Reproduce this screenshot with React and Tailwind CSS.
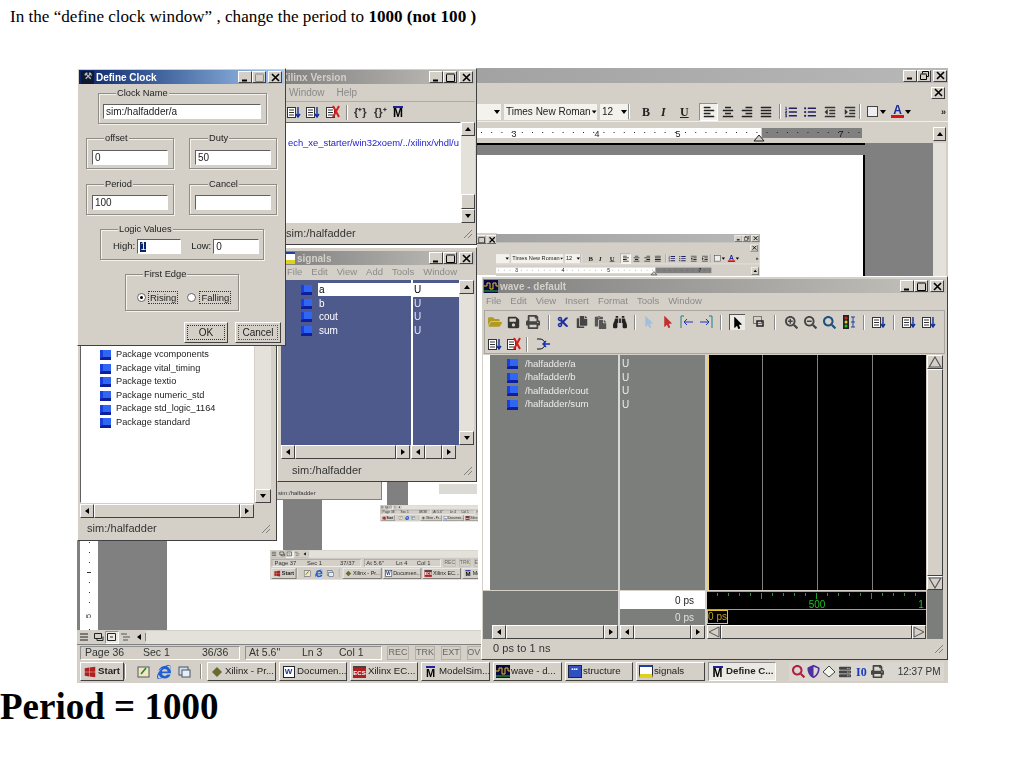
import {
  FaAlignCenter,
  FaAlignJustify,
  FaAlignLeft,
  FaAlignRight,
  FaBinoculars,
  FaCopy,
  FaCut,
  FaFolderOpen,
  FaIndent,
  FaInternetExplorer,
  FaListOl,
  FaListUl,
  FaMousePointer,
  FaOutdent,
  FaPaste,
  FaPrint,
  FaSave,
  FaSearch,
  FaSearchMinus,
  FaSearchPlus,
  FaServer,
  FaShieldAlt,
  FaWindows,
} from "react-icons/fa";

const raised = "border border-t-white border-l-white border-r-[#404040] border-b-[#404040]";
const sunken = "border border-t-[#606060] border-l-[#606060] border-r-white border-b-white";
const thin = "border border-t-[#909090] border-l-[#909090] border-r-white border-b-white";
const track = "bg-[#e4e1da]";

const Glyph = ({ kind, muted }) => {
  const c = muted ? "#8a8a8a" : "#000";
  return (
    <svg width="9" height="9" viewBox="0 0 9 9" fill="none" stroke={c}>
      {kind === "min" && <path d="M1 7.5h5" strokeWidth="2" />}
      {kind === "max" && <path d="M.5 1h8M.5 1.5v7h8v-7" />}
      {kind === "restore" && <path d="M2.5 2.5V.5h6v5h-2M.5 3h6M.5 3.5v5h6v-5" />}
      {kind === "close" && <path d="M1 1l7 7M8 1L1 8" strokeWidth="1.6" />}
    </svg>
  );
};

const CapBtn = ({ kind, muted }) => (
  <div className={`w-[14px] h-[12px] flex items-center justify-center bg-[#d4d0c8] ${raised}`}>
    <Glyph kind={kind} muted={muted} />
  </div>
);

const Caption = ({ icon, text, active, restore, muted }) => (
  <div
    className={`h-[14px] flex items-center justify-between px-[2px] ${
      active
        ? "bg-gradient-to-r from-[#0a246a] to-[#a6caf0] text-white"
        : "bg-gradient-to-r from-[#808080] to-[#c4c2bc] text-[#d4d0c8]"
    }`}
  >
    <div className="flex items-center gap-[2px] text-[10px] font-bold whitespace-nowrap">
      {icon}
      {text}
    </div>
    <div className="flex items-center">
      <CapBtn kind="min" />
      <CapBtn kind={restore ? "restore" : "max"} muted={muted} />
      <div className="w-[2px]" />
      <CapBtn kind="close" />
    </div>
  </div>
);

const Arrow = ({ dir }) => {
  const pts = {
    up: "4,2 1,6 7,6",
    down: "1,2 7,2 4,6",
    left: "6,1 6,7 2,4",
    right: "2,1 2,7 6,4",
  };
  return (
    <svg width="8" height="8" viewBox="0 0 8 8">
      <polygon points={pts[dir]} fill="#000" />
    </svg>
  );
};

const SBtn = ({ dir, className }) => (
  <div className={`shrink-0 flex items-center justify-center bg-[#d4d0c8] ${raised} ${className}`}>
    <Arrow dir={dir} />
  </div>
);

const HScroll = ({ className }) => (
  <div className={`flex h-[14px] ${className}`}>
    <SBtn dir="left" className="w-[14px]" />
    <div className={`flex-1 bg-[#d4d0c8] ${raised}`} />
    <SBtn dir="right" className="w-[14px]" />
  </div>
);

const Grip = () => (
  <svg width="11" height="11" viewBox="0 0 11 11" stroke="#808080" className="shrink-0">
    <path d="M10 2L2 10M10 6L6 10" />
  </svg>
);

const StatusGrip = ({ text, className }) => (
  <div className={`flex items-center justify-between text-[11px] tracking-[0.05px] text-[#333] ${className}`}>
    <span>{text}</span>
    <Grip />
  </div>
);

const Cube = () => (
  <svg width="11" height="11" viewBox="0 0 11 11" className="shrink-0">
    <rect x="0" y="1" width="11" height="10" fill="#1a3fe0" />
    <path d="M3 1h8v7L3 9z" fill="#2f67f4" />
    <path d="M0 9l3-1h8v3H0z" fill="#0e1f9c" />
  </svg>
);

const DocList = ({ red }) => (
  <svg width="14" height="14" viewBox="0 0 14 14" className="shrink-0">
    <rect x=".5" y="2.5" width="8" height="10" fill="#fff" stroke="#333" />
    <path d="M2 5h5M2 7.5h5M2 10h5" stroke="#333" />
    {red ? (
      <path d="M7 1l6 11M13 1L7 12" stroke="#d02020" strokeWidth="2" />
    ) : (
      <path d="M11 2v9M9 9l2 3 2-3" stroke="#1030a0" strokeWidth="1.4" fill="none" />
    )}
  </svg>
);

const Wave = () => (
  <svg width="14" height="13" viewBox="0 0 14 13" className="shrink-0">
    <rect width="14" height="13" fill="#0a0a40" />
    <path d="M0 6h3v-3h3v6h3v-6h3v3h2" stroke="#e8c020" fill="none" />
    <path d="M0 11h14" stroke="#20c020" />
  </svg>
);

const Sim = ({ className }) => (
  <span className={`inline-block border-t-2 border-t-[#2020a0] font-bold leading-[10px] text-black ${className}`}>
    M
  </span>
);

const Sep = ({ className }) => (
  <div className={`w-[2px] h-[15px] border-l border-l-[#8a8a8a] border-r border-r-white shrink-0 ${className}`} />
);

const Tool = ({ children, className }) => (
  <div className={`w-[19px] h-[18px] flex items-center justify-center shrink-0 ${className}`}>{children}</div>
);

const Ruler = () => {
  const ticks = Array.from({ length: 38 }, (_, i) => 4 + i * 10.2);
  return (
    <svg width="385" height="21" viewBox="0 0 385 21" className="shrink-0">
      <rect y="6" width="284" height="10" fill="#fff" />
      <rect x="285" y="6" width="100" height="10" fill="#808080" />
      {ticks.map((x) => (
        <rect key={x} x={x} y="10" width="1" height="1" fill="#222" />
      ))}
      <polygon points="282,13 277,19 287,19" fill="#d4d0c8" stroke="#222" />
      <text x="37" y="14.5" fontSize="9" fill="#222" textAnchor="middle" fontFamily="Liberation Sans">3</text>
      <text x="120" y="14.5" fontSize="9" fill="#222" textAnchor="middle" fontFamily="Liberation Sans">4</text>
      <text x="201" y="14.5" fontSize="9" fill="#222" textAnchor="middle" fontFamily="Liberation Sans">5</text>
      <text x="364" y="14.5" fontSize="9" fill="#111" textAnchor="middle" fontFamily="Liberation Sans">7</text>
    </svg>
  );
};

const WordHeader = () => (
  <div className="w-[471px] bg-[#d4d0c8]">
    <div className="h-[15px] flex items-center justify-end pr-[1px] bg-gradient-to-r from-[#a2a2a2] to-[#b8b8b8]">
      <CapBtn kind="min" />
      <CapBtn kind="restore" />
      <div className="w-[2px]" />
      <CapBtn kind="close" />
    </div>
    <div className="h-[19px] flex items-center justify-end pr-[3px]">
      <CapBtn kind="close" />
    </div>
    <div className="h-[20px] flex items-center text-[10px] text-[#222] border-b border-b-[#eeeeee]">
      <div className="w-[24px] h-[16px] bg-[#f4f2ec] flex items-center justify-end shrink-0">
        <Arrow dir="down" />
      </div>
      <div className="w-[93px] h-[16px] ml-[3px] pl-[2px] bg-[#f4f2ec] flex items-center justify-between shrink-0 whitespace-nowrap">
        Times New Roman
        <Arrow dir="down" />
      </div>
      <div className="w-[28px] h-[16px] ml-[3px] pl-[2px] bg-[#f4f2ec] flex items-center justify-between shrink-0">
        12
        <Arrow dir="down" />
      </div>
      <Sep />
      <span className="ml-[12px] w-[19px] font-bold text-[12px] [font-family:'Liberation_Serif',serif]">B</span>
      <span className="w-[19px] italic font-bold text-[12px] [font-family:'Liberation_Serif',serif]">I</span>
      <span className="w-[19px] underline font-bold text-[12px] [font-family:'Liberation_Serif',serif]">U</span>
      <Tool className={`bg-[#f2f0ea] ${thin}`}><FaAlignLeft size={12} /></Tool>
      <Tool><FaAlignCenter size={12} /></Tool>
      <Tool><FaAlignRight size={12} /></Tool>
      <Tool><FaAlignJustify size={12} /></Tool>
      <Sep className="ml-[4px]" />
      <Tool><FaListOl size={12} color="#202060" /></Tool>
      <Tool><FaListUl size={12} color="#202060" /></Tool>
      <Tool className="ml-[1px]"><FaOutdent size={12} color="#333" /></Tool>
      <Tool className="ml-[1px]"><FaIndent size={12} color="#333" /></Tool>
      <Sep />
      <Tool className="ml-[2px]"><div className="w-[11px] h-[11px] border border-[#444] bg-[#eeeeee]" /></Tool>
      <span className="-ml-[3px]"><Arrow dir="down" /></span>
      <div className="ml-[4px] w-[13px] flex flex-col items-center leading-[10px] font-bold text-[#1a2a9a] text-[12px]">
        A
        <div className="w-[13px] h-[3px] bg-[#e01010]" />
      </div>
      <Arrow dir="down" />
      <span className="ml-auto pr-[2px] text-[9px] font-bold leading-[8px]">»</span>
    </div>
    <div className="h-[21px] flex items-center">
      <Ruler />
      <div className="flex-1" />
      <SBtn dir="up" className="w-[13px] h-[14px] mr-[2px] mt-[3px]" />
    </div>
  </div>
);

const Field = ({ children, className }) => (
  <div className={`h-[14px] flex items-center justify-center border border-[#b4b0a8] ${className}`}>
    <span className="text-[#666] text-[9px]">{children}</span>
  </div>
);

const StatusRow = ({ page, total, ln }) => (
  <div className="h-[15px] flex items-center text-[10.5px] whitespace-nowrap text-[#333] bg-[#d4d0c8]">
    <div className={`ml-[3px] w-[160px] h-[14px] flex items-center pl-[4px] ${thin}`}>
      <span className="w-[58px]">Page {page}</span>
      <span className="w-[59px]">Sec 1</span>
      <span>{total}</span>
    </div>
    <div className={`ml-[5px] w-[137px] h-[14px] flex items-center pl-[3px] ${thin}`}>
      <span className="w-[53px]">At 5.6"</span>
      <span className="w-[37px]">Ln {ln}</span>
      <span>Col 1</span>
    </div>
    <div className="ml-[5px] flex gap-[6px]">
      <Field className="w-[22px]">REC</Field>
      <Field className="w-[20px]">TRK</Field>
      <Field className="w-[20px]">EXT</Field>
      <Field className="w-[20px]">OVR</Field>
    </div>
  </div>
);

const ViewIcon = ({ kind }) => (
  <svg width="11" height="10" viewBox="0 0 11 10" fill="none" stroke="#222">
    {kind === 0 && <path d="M1 2h8M1 5h8M1 8h8" />}
    {kind === 1 && <path d="M1.5 1.5h7v5h-7zM4 6.5v2h6v-4" />}
    {kind === 2 && <path d="M1.5 1.5h8v7h-8zM4 5h3" />}
    {kind === 3 && <path d="M1 2h6M3 5h7M3 8h5" stroke="#555" />}
  </svg>
);

const ViewRow = () => (
  <div className="h-[15px] flex items-center bg-[#d4d0c8] pl-[1px] border-b border-b-[#808080]">
    {[0, 1, 2, 3].map((k) => (
      <div
        key={k}
        className={`w-[13.5px] h-[13px] flex items-center justify-center shrink-0 ${k === 2 ? `bg-[#eceae4] ${thin}` : ""}`}
      >
        <ViewIcon kind={k} />
      </div>
    ))}
    <div className="w-[14px] flex justify-center border-r border-r-[#808080]">
      <Arrow dir="left" />
    </div>
    <div className={`flex-1 h-[13px] ${track}`} />
  </div>
);

const TaskBtn = ({ icon, text, className, pressed }) => (
  <div
    className={`h-[19px] px-[1px] flex items-center gap-[1px] whitespace-nowrap shrink-0 text-[9.7px] text-[#222] ${
      pressed ? `bg-[#ebe9e3] font-bold ${thin}` : raised
    } ${className}`}
  >
    <span className="w-[15px] flex justify-center shrink-0">{icon}</span>
    {text}
  </div>
);

const Taskbar = () => (
  <div className="h-[23px] w-[871px] bg-[#d4d0c8] flex items-center pl-[3px] shrink-0">
    <TaskBtn
      className="w-[44px] font-bold"
      text="Start"
      icon={<FaWindows size={12} color="#b02020" />}
    />
    <Sep />
    <div className="ml-[11px] flex items-center gap-[7px] w-[63px]">
      <svg width="13" height="13" viewBox="0 0 13 13">
        <rect x="1" y="2" width="11" height="10" fill="#efe8c0" stroke="#556" />
        <path d="M4 9l5-6" stroke="#208020" strokeWidth="1.5" />
      </svg>
      <FaInternetExplorer size={14} color="#2060d0" />
      <svg width="13" height="13" viewBox="0 0 13 13">
        <rect x="1" y="2" width="9" height="8" fill="#d0e0f0" stroke="#456" />
        <rect x="4" y="5" width="8" height="7" fill="#e8eef8" stroke="#456" />
      </svg>
    </div>
    <Sep />
    <div className="ml-[5px] flex gap-[3px]">
      <TaskBtn
        className="w-[69px]"
        text="Xilinx - Pr..."
        icon={<svg width="12" height="12" viewBox="0 0 12 12"><path d="M6 1l5 5-5 5-5-5z" fill="#6a6a30" /></svg>}
      />
      <TaskBtn
        className="w-[68px]"
        text="Documen..."
        icon={<span className="block w-[12px] h-[12px] bg-white border border-[#223] text-[8px] font-bold leading-[10px] text-center text-[#1030a0]">W</span>}
      />
      <TaskBtn
        className="w-[68px]"
        text="Xilinx EC..."
        icon={<span className="block w-[13px] h-[12px] bg-[#b02020] border-t-2 border-t-[#444] text-[6px] font-bold leading-[10px] text-center text-white">ECS</span>}
      />
      <TaskBtn className="w-[69px]" text="ModelSim..." icon={<Sim className="text-[11px]" />} />
      <TaskBtn className="w-[69px]" text="wave - d..." icon={<Wave />} />
      <TaskBtn
        className="w-[68px]"
        text="structure"
        icon={<span className="block w-[14px] h-[13px] bg-[#3050c0] border border-[#224] text-[6px] leading-[6px] text-white text-center">▪▪▪</span>}
      />
      <TaskBtn
        className="w-[69px]"
        text="signals"
        icon={<span className="block w-[14px] h-[13px] bg-white border border-[#224] border-t-2 border-t-[#2040a0] border-b-4 border-b-[#e0d020]" />}
      />
      <TaskBtn className="w-[68px]" pressed text="Define C..." icon={<Sim className="text-[12px]" />} />
    </div>
    <div className="ml-[13px] w-[155px] h-[19px] bg-[#dad7d0] flex items-center pl-[3px] gap-[2px] text-[10px] text-[#333]">
      <FaSearch size={13} color="#b02040" />
      <FaShieldAlt size={13} color="#5030a0" />
      <svg width="14" height="13" viewBox="0 0 14 13"><path d="M7 1l6 6-6 5-6-5z" fill="#f4f2ec" stroke="#444" /></svg>
      <FaServer size={12} color="#444" className="ml-[1px]" />
      <span className="ml-[3px] font-bold text-[12px] text-[#1838c0] [font-family:'Liberation_Serif',serif]">I0</span>
      <FaPrint size={13} color="#444" className="ml-[2px]" />
      <span className="ml-[12px] whitespace-nowrap">12:37 PM</span>
    </div>
  </div>
);

const Group = ({ label, children, className, labelClass }) => (
  <div className={`relative border border-[#8f8d87] shadow-[inset_1px_1px_0_#f4f2ec,1px_1px_0_#f4f2ec] ${className}`}>
    <span className={`absolute -top-[7px] px-[1px] bg-[#d4d0c8] text-[9.3px] leading-[13px] whitespace-nowrap ${labelClass}`}>
      {label}
    </span>
    {children}
  </div>
);

const Input = ({ children, className }) => (
  <div className={`h-[15px] bg-white pl-[2px] flex items-center text-[10px] leading-none whitespace-nowrap ${sunken} ${className}`}>
    {children}
  </div>
);

const DefineClock = () => (
  <div className={`absolute left-0 top-0 w-[209px] h-[278px] bg-[#d4d0c8] p-[1px] text-[#222] ${raised}`}>
    <Caption
      active
      muted
      text="Define Clock"
      icon={
        <span className="w-[13px] h-[13px] bg-[#101830] flex items-center justify-center text-[9px] text-[#b0b8c0]">
          ⚒
        </span>
      }
    />
    <Group label="Clock Name" labelClass="left-[17px]" className="ml-[19px] mt-[9px] w-[169px] h-[31px] pt-[10px] pl-[4px]">
      <Input className="w-[158px]">sim:/halfadder/a</Input>
    </Group>
    <div className="flex ml-[7px] mt-[14px] gap-[15px]">
      <Group label="offset" labelClass="left-[17px]" className="w-[88px] h-[31px] pt-[11px] pl-[5px]">
        <Input className="w-[76px]">0</Input>
      </Group>
      <Group label="Duty" labelClass="left-[18px]" className="w-[88px] h-[31px] pt-[11px] pl-[5px]">
        <Input className="w-[76px]">50</Input>
      </Group>
    </div>
    <div className="flex ml-[7px] mt-[15px] gap-[15px]">
      <Group label="Period" labelClass="left-[17px]" className="w-[88px] h-[31px] pt-[10px] pl-[5px]">
        <Input className="w-[76px]">100</Input>
      </Group>
      <Group label="Cancel" labelClass="left-[18px]" className="w-[88px] h-[31px] pt-[10px] pl-[5px]">
        <Input className="w-[76px]" />
      </Group>
    </div>
    <Group
      label="Logic Values"
      labelClass="left-[17px]"
      className="ml-[21px] mt-[14px] w-[164px] h-[31px] flex items-center text-[9.5px] pt-[4px] pl-[12px]"
    >
      <span>High:</span>
      <Input className="ml-[2px] w-[44px]">
        <span className="bg-[#0a246a] text-white w-[6px] text-center">1</span>
      </Input>
      <span className="ml-[10px]">Low:</span>
      <Input className="ml-[2px] w-[46px]">0</Input>
    </Group>
    <Group
      label="First Edge"
      labelClass="left-[17px]"
      className="ml-[46px] mt-[14px] w-[114px] h-[37px] flex items-center text-[9.5px] pt-[9px] pl-[11px]"
    >
      <div className="w-[9px] h-[9px] rounded-full bg-white border border-[#666] flex items-center justify-center">
        <div className="w-[3px] h-[3px] rounded-full bg-black" />
      </div>
      <span className="ml-[2px] px-[1px] border border-dotted border-[#333] leading-[11px]">Rising</span>
      <div className="ml-[9px] w-[9px] h-[9px] rounded-full bg-white border border-[#666]" />
      <span className="ml-[3px] px-[1px] border border-dotted border-[#333] leading-[11px]">Falling</span>
    </Group>
    <div className="flex justify-end gap-[7px] mt-[11px] pr-[3px] text-[10px]">
      <div className={`w-[44px] h-[21px] flex items-center justify-center ${raised}`}>
        <span className="w-[38px] h-[15px] border border-dotted border-[#333] text-center leading-[13px]">OK</span>
      </div>
      <div className={`w-[46px] h-[21px] flex items-center justify-center ${raised}`}>
        <span className="w-[40px] h-[15px] border border-dotted border-[#555] text-center leading-[13px]">Cancel</span>
      </div>
    </div>
  </div>
);

const PACKAGES = ["vcomponents", "vital_timing", "textio", "numeric_std", "std_logic_1164", "standard"];

const Structure = () => (
  <div className={`absolute left-0 top-0 w-[200px] h-[473px] flex flex-col bg-[#d4d0c8] p-[2px] ${raised}`}>
    <div className="flex-1 flex min-h-0">
      <div className="flex-1 flex flex-col min-w-0">
        <div className={`flex-1 bg-white pt-[276px] pl-[19px] text-[9.2px] text-[#222] ${sunken}`}>
          {PACKAGES.map((p) => (
            <div key={p} className="h-[13.6px] flex items-center gap-[5px] whitespace-nowrap">
              <Cube />
              Package {p}
            </div>
          ))}
        </div>
        <HScroll className={`mt-[1px] ${track}`} />
      </div>
      <div className="w-[16px] flex flex-col justify-end mr-[3px] ml-[1px] mb-[15px] bg-[#e4e1da]">
        <SBtn dir="down" className="h-[14px]" />
      </div>
    </div>
    <StatusGrip text="sim:/halfadder" className="h-[20px] pl-[7px] pr-[3px]" />
  </div>
);

const Xilinx = () => (
  <div className={`absolute left-[200px] top-0 w-[200px] h-[177px] flex flex-col bg-[#d4d0c8] p-[1px] ${raised}`}>
    <Caption text="Xilinx Version" />
    <div className="h-[17px] pl-[10px] flex items-center gap-[12px] text-[10px] text-[#8a8a8a]">
      <span>Window</span>
      <span>Help</span>
    </div>
    <div className="h-[21px] pl-[8px] flex items-center border-t border-t-[#aaa]">
      <DocList />
      <div className="w-[5px]" />
      <DocList />
      <div className="w-[6px]" />
      <DocList red />
      <div className="w-[6px]" />
      <Sep />
      <div className="w-[6px]" />
      <span className="w-[20px] text-[11px] font-bold text-[#333]">{"{⁺}"}</span>
      <span className="w-[19px] text-[11px] font-bold text-[#333]">{"{}⁺"}</span>
      <Sim className="text-[12px]" />
    </div>
    <div className="flex flex-1 min-h-0">
      <div className={`w-[182px] shrink-0 bg-white pt-[13px] pl-[8px] whitespace-nowrap text-[9.4px] text-[#2020d0] ${sunken}`}>
        ech_xe_starter/win32xoem/../xilinx/vhdl/u
      </div>
      <div className={`w-[14px] flex flex-col ${track}`}>
        <SBtn dir="up" className="h-[14px]" />
        <div className="flex-1" />
        <div className={`h-[15px] bg-[#d4d0c8] ${raised}`} />
        <SBtn dir="down" className="h-[14px]" />
      </div>
    </div>
    <StatusGrip text="sim:/halfadder" className="h-[20px] pl-[7px] pr-[2px]" />
  </div>
);

const Signals = () => (
  <div className={`absolute left-[200px] top-[179px] w-[200px] h-[235px] flex flex-col bg-[#d4d0c8] p-[1px] ${raised}`}>
    <div className="mt-[2px]">
      <Caption
        text="signals"
        icon={<span className="w-[11px] h-[12px] ml-[3px] bg-white border-t-2 border-t-[#2040a0] border-b-4 border-b-[#e0d020]" />}
      />
    </div>
    <div className="h-[15px] pl-[8px] flex items-center gap-[9px] text-[9.5px] text-[#8a8a8a]">
      <span>File</span>
      <span>Edit</span>
      <span>View</span>
      <span>Add</span>
      <span>Tools</span>
      <span>Window</span>
    </div>
    <div className="flex-1 flex min-h-0 pl-[2px]">
      <div className="w-[130px] bg-[#4f5a8c] pt-[3px] pl-[20px] text-[10px] text-white flex flex-col">
        {["a", "b", "cout", "sum"].map((s, i) => (
          <div key={s} className="h-[13.6px] flex items-center gap-[6px]">
            <Cube />
            <span className={i === 0 ? "w-[97px] h-[13px] bg-white text-black pl-[1px] leading-[13px]" : "pl-[1px]"}>{s}</span>
          </div>
        ))}
      </div>
      <div className="w-[2px] bg-white" />
      <div className="w-[46px] bg-[#4f5a8c] pt-[3px] text-[10px] text-[#e4e4f0] flex flex-col">
        {["U", "U", "U", "U"].map((u, i) => (
          <div key={i} className={`h-[13.6px] pl-[1px] leading-[13px] ${i === 0 ? "bg-white text-black" : ""}`}>
            {u}
          </div>
        ))}
      </div>
      <div className={`w-[15px] flex flex-col justify-between ${track}`}>
        <SBtn dir="up" className="h-[14px]" />
        <SBtn dir="down" className="h-[14px]" />
      </div>
    </div>
    <div className="h-[15px] flex pl-[2px] pr-[19px] gap-[1px]">
      <HScroll className="w-[130px]" />
      <HScroll className="w-[46px]" />
    </div>
    <StatusGrip text="sim:/halfadder" className="h-[20px] pl-[13px] pr-[2px]" />
  </div>
);

const Hollow = ({ dir, className }) => (
  <div className={`shrink-0 bg-[#d4d0c8] ${raised} ${className}`}>
    <svg width="100%" height="100%" viewBox="0 0 12 12" preserveAspectRatio="none" fill="none" stroke="#555">
      {dir === "up" && <path d="M6 1L1 11h10z" />}
      {dir === "down" && <path d="M1 1h10L6 11z" />}
      {dir === "left" && <path d="M11 1v10L1 6z" />}
      {dir === "right" && <path d="M1 1v10l10-5z" />}
    </svg>
  </div>
);

const WaveWindow = () => (
  <div className={`absolute left-[404px] top-[208px] w-[467px] h-[384px] flex flex-col bg-[#d4d0c8] p-[1px] ${raised}`}>
    <div className="mt-[1px]">
      <Caption text="wave - default" icon={<span className="-ml-[1px]"><Wave /></span>} />
    </div>
    <div className="h-[16px] pl-[3px] flex items-center gap-[9px] text-[9.5px] text-[#8a8a8a]">
      <span>File</span>
      <span>Edit</span>
      <span>View</span>
      <span>Insert</span>
      <span>Format</span>
      <span>Tools</span>
      <span>Window</span>
    </div>
    <div className="mx-[1px] mt-[1px] h-[44px] pt-[2px] border border-[#a8a69f] flex flex-col gap-[4px] text-[#333]">
      <div className="flex items-center h-[18px]">
        <Tool><FaFolderOpen size={14} color="#b09a20" /></Tool>
        <Tool><FaSave size={13} color="#333" /></Tool>
        <Tool><FaPrint size={14} color="#444" /></Tool>
        <Sep className="ml-[6px]" />
        <Tool className="ml-[3px]"><FaCut size={12} color="#2030a0" /></Tool>
        <Tool><FaCopy size={12} color="#444" /></Tool>
        <Tool><FaPaste size={13} color="#555" /></Tool>
        <Tool><FaBinoculars size={14} color="#222" /></Tool>
        <Sep className="ml-[5px]" />
        <Tool className="ml-[3px]"><FaMousePointer size={12} color="#a0c0e0" /></Tool>
        <Tool><FaMousePointer size={12} color="#c03030" /></Tool>
        <Tool>
          <svg width="14" height="14" viewBox="0 0 14 14" fill="none" stroke="#2030c0"><path d="M1 1v12M1 1h3" stroke="#208080" /><path d="M13 7H4M7 4L4 7l3 3" /></svg>
        </Tool>
        <Tool>
          <svg width="14" height="14" viewBox="0 0 14 14" fill="none" stroke="#2030c0"><path d="M13 1v12M13 1h-3" stroke="#208080" /><path d="M1 7h9M7 4l3 3-3 3" /></svg>
        </Tool>
        <Sep className="ml-[5px]" />
        <div className="ml-[7px] w-[16px] h-[16px] bg-[#eceae4] border-t border-l border-[#555] flex items-center justify-center shrink-0">
          <FaMousePointer size={12} color="#000" />
        </div>
        <Tool className="ml-[5px]">
          <svg width="13" height="13" viewBox="0 0 13 13" fill="none" stroke="#222"><rect x=".5" y=".5" width="8" height="7" strokeDasharray="1 1" /><rect x="4" y="5" width="6" height="5" strokeWidth="1.5" /></svg>
        </Tool>
        <Sep className="ml-[5px]" />
        <Tool className="ml-[6px]"><FaSearchPlus size={13} color="#444" /></Tool>
        <Tool><FaSearchMinus size={13} color="#444" /></Tool>
        <Tool><FaSearch size={13} color="#205080" /></Tool>
        <Tool>
          <svg width="14" height="14" viewBox="0 0 14 14"><rect x="1" y="0" width="6" height="14" fill="#222" /><circle cx="4" cy="3" r="1.5" fill="#e02020" /><circle cx="4" cy="7" r="1.5" fill="#e0d020" /><circle cx="4" cy="11" r="1.5" fill="#20c020" /><path d="M9 2h4M9 7h4M9 12h4M11 2v10" stroke="#2040a0" fill="none" /></svg>
        </Tool>
        <Sep className="ml-[5px]" />
        <Tool className="ml-[4px]"><DocList /></Tool>
        <Sep className="ml-[5px]" />
        <Tool className="ml-[4px]"><DocList /></Tool>
        <Tool className="ml-[1px]"><DocList /></Tool>
      </div>
      <div className="flex items-center h-[18px]">
        <Tool><DocList /></Tool>
        <Tool><DocList red /></Tool>
        <Sep className="ml-[3px]" />
        <Tool className="ml-[5px]">
          <svg width="14" height="14" viewBox="0 0 14 14" fill="none" stroke="#111"><path d="M1 2h3a3 3 0 010 10H1" /><path d="M14 7H7M10 4L7 7l3 3" stroke="#1030c0" strokeWidth="1.4" /></svg>
        </Tool>
      </div>
    </div>
    <div className="flex-1 flex min-h-0 mt-[1px]">
      <div className="w-[135px] flex flex-col">
        <div className="flex-1 bg-[#7c7e7b] border-l-[7px] border-l-white pt-[2px] pl-[17px] text-[9.6px] text-[#ececec] flex flex-col">
          {["a", "b", "cout", "sum"].map((s) => (
            <div key={s} className="h-[13.6px] flex items-center gap-[7px]">
              <Cube />/halfadder/{s}
            </div>
          ))}
        </div>
        <div className="h-[34px] mt-[1px] bg-[#767875]" />
        <div className="bg-[#767875] pl-[9px]"><HScroll /></div>
      </div>
      <div className="w-[2px] bg-[#d8d8d8]" />
      <div className="w-[85px] flex flex-col">
        <div className="flex-1 bg-[#7c7e7b] pt-[2px] pl-[2px] text-[10px] text-[#ececec]">
          {["U", "U", "U", "U"].map((u, i) => (
            <div key={i} className="h-[13.6px] leading-[13.6px]">{u}</div>
          ))}
        </div>
        <div className="h-[18px] mt-[1px] bg-white text-[10px] text-[#222] flex items-center justify-end pr-[11px]">0 ps</div>
        <div className="h-[16px] bg-[#7c7e7b] text-[10px] text-[#e0e0e0] flex items-center justify-end pr-[11px]">0 ps</div>
        <HScroll />
      </div>
      <div className="w-[2px] bg-[#d4d0c8]" />
      <div className="w-[219px] flex flex-col">
        <div className="flex-1 flex bg-black border-l-2 border-l-[#f0d060]">
          <div className="w-[54px] border-r border-r-[#808080]" />
          <div className="w-[55px] border-r border-r-[#808080]" />
          <div className="w-[55px] border-r border-r-[#808080]" />
        </div>
        <div className="h-[18px] mt-[1px] bg-black border-t border-t-[#a0a0a0]">
          <svg width="219" height="17" viewBox="0 0 219 17">
            {Array.from({ length: 20 }, (_, i) => (
              <rect key={i} x={10 + i * 11} y="1" width="1" height={i % 5 === 4 ? 6 : 3} fill="#20a020" />
            ))}
            <text x="110" y="15.5" fontSize="10" fill="#20c020" textAnchor="middle" fontFamily="Liberation Sans">500</text>
            <text x="214" y="15.5" fontSize="10" fill="#20c020" textAnchor="middle" fontFamily="Liberation Sans">1</text>
          </svg>
        </div>
        <div className="h-[16px] bg-black border-t border-t-[#a0a0a0]">
          <span className="block w-[21px] h-[14px] border border-[#e0c030] text-[10px] leading-[12px] text-[#c0a020] text-center whitespace-nowrap">
            0 ps
          </span>
        </div>
        <div className="h-[14px] flex">
          <Hollow dir="left" className="w-[14px]" />
          <div className={`flex-1 bg-[#d4d0c8] ${raised}`} />
          <Hollow dir="right" className="w-[14px]" />
        </div>
      </div>
      <div className="flex-1 flex flex-col ml-[1px] mr-[3px]">
        <Hollow dir="up" className="h-[14px]" />
        <div className={`flex-1 bg-[#d4d0c8] ${raised}`} />
        <Hollow dir="down" className="h-[14px]" />
        <div className="h-[49px] bg-[#7c7e7b]" />
      </div>
    </div>
    <StatusGrip text="0 ps to 1 ns" className="h-[19px] pl-[10px] pr-[2px]" />
  </div>
);

const App = () => (
  <div className="w-[1024px] h-[768px] bg-white overflow-hidden [font-family:'Liberation_Serif',serif]">
    <p className="h-[68px] pl-[10px] pt-[8px] text-[17.1px] leading-[18px] text-black">
      In the “define clock window” , change the period to <b>1000 (not 100 )</b>
    </p>
    <div className="relative w-[871px] ml-[77px] [font-family:'Liberation_Sans',sans-serif] blur-[0.3px]">
      <div className="h-[592px] flex flex-col bg-[#d4d0c8] overflow-hidden">
        <div className="pl-[400px] shrink-0">
          <WordHeader />
        </div>
        <div className="flex-1 flex min-h-0">
          <div className="flex-1 flex flex-col bg-[#808080]">
            <div className="h-[2px] bg-black ml-[400px] w-[388px]" />
            <div className="h-[10px]" />
            <div className="flex-1 flex min-h-0">
              <div className="ml-[3px] w-[18px] bg-white shrink-0 flex flex-col items-center justify-end gap-[9px] text-[8px] leading-none text-[#333]">
                <div className="w-[1px] h-[1px] bg-[#333]" />
                <div className="w-[1px] h-[1px] bg-[#333]" />
                <div className="w-[1px] h-[1px] bg-[#333]" />
                <div className="w-[4px] h-[1px] bg-[#333]" />
                <div className="w-[1px] h-[1px] bg-[#333]" />
                <div className="w-[1px] h-[1px] bg-[#333]" />
                <div className="w-[1px] h-[1px] bg-[#333]" />
                <span className="-rotate-90">5</span>
                <div className="w-[1px] h-[1px] bg-[#333]" />
              </div>
              <div className="w-[69px] shrink-0" />
              <div className="w-[698px] bg-white border-r-2 border-r-black shrink-0" />
            </div>
          </div>
          <div className={`w-[13px] mr-[2px] ${track}`} />
        </div>
        <ViewRow />
        <StatusRow page="36" total="36/36" ln="3" />
      </div>
      <Taskbar />

      <div className="absolute left-[400px] top-[165px] w-[20px] h-[42px] bg-[#d4d0c8] flex justify-end">
        <div className="flex h-[8px] mt-[2px] scale-75 origin-top-right">
          <CapBtn kind="max" />
          <CapBtn kind="close" />
        </div>
      </div>
      <div className="absolute left-[419px] top-[166px] w-[264px] h-[42px] overflow-hidden blur-[0.3px]">
        <div className="origin-top-left scale-[0.56] w-[471px]">
          <WordHeader />
        </div>
      </div>
      <div className="absolute left-[200px] top-[414px] w-[105px] h-[18px] bg-[#d4d0c8] border-r border-b border-[#808080] text-[6px] text-[#333] pt-[7px] pl-[1px] blur-[0.2px]">
        sim:/halfadder
      </div>
      <div className="absolute left-[206px] top-[432px] w-[39px] h-[50px] bg-[#808080]" />
      <div className="absolute left-[310px] top-[414px] w-[21px] h-[23px] bg-[#808080]" />
      <div className="absolute left-[362px] top-[416px] w-[38px] h-[10px] bg-[#dcdad4] blur-[0.5px]" />
      <div className="absolute left-[193px] top-[482px] w-[208px] h-[30px] overflow-hidden blur-[0.3px]">
        <div className="origin-top-left scale-[0.56] w-[871px]">
          <ViewRow />
          <StatusRow page="37" total="37/37" ln="4" />
          <Taskbar />
        </div>
      </div>
      <div className="absolute left-[303px] top-[437px] w-[98px] h-[17px] overflow-hidden blur-[0.3px]">
        <div className="origin-top-left scale-[0.31] w-[871px]">
          <ViewRow />
          <StatusRow page="38" total="38/38" ln="4" />
          <Taskbar />
        </div>
      </div>

      <Structure />
      <Xilinx />
      <Signals />
      <WaveWindow />
      <DefineClock />
    </div>
    <h1 className="pt-[3px] text-[37px] leading-[42px] font-bold text-black">Period = 1000</h1>
  </div>
);

export default App;
